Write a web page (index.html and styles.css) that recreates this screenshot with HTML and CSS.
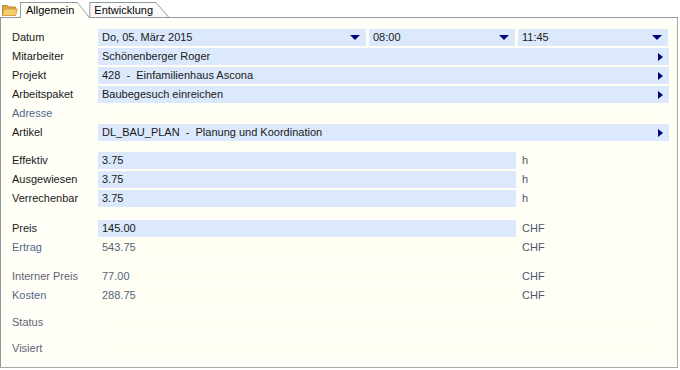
FILE: index.html
```html
<!DOCTYPE html>
<html lang="de">
<head>
    <meta charset="UTF-8">
    <meta name="viewport" content="width=device-width, initial-scale=1.0">
    <title>Rapport</title>
    <link rel="stylesheet" href="styles.css">
</head>
<body>
    <div class="tabbar">
        <svg class="folder" width="16" height="12" viewBox="0 0 16 12">
            <path d="M0.5 1.5 H5.5 L7 3 H13.5 V11.5 H0.5 Z" fill="#d9a441" stroke="#c08a2c" stroke-width="1"/>
            <path d="M0.5 11.5 L2.5 5 H15.5 L13.5 11.5 Z" fill="#f7cd72" stroke="#d9a441" stroke-width="1"/>
        </svg>
        <div class="tab active"><span>Allgemein</span></div>
        <div class="tab"><span>Entwicklung</span></div>
    </div>

    <div class="panel">
        <div class="group">
            <div class="row">
                <span class="label">Datum</span>
                <div class="cells date-cells">
                    <div class="field drop">Do, 05. März 2015</div>
                    <div class="field drop">08:00</div>
                    <div class="field drop">11:45</div>
                </div>
            </div>
            <div class="row">
                <span class="label">Mitarbeiter</span>
                <div class="field next">Schönenberger Roger</div>
            </div>
            <div class="row">
                <span class="label">Projekt</span>
                <div class="field next">428 &nbsp;-&nbsp; Einfamilienhaus Ascona</div>
            </div>
            <div class="row">
                <span class="label">Arbeitspaket</span>
                <div class="field next">Baubegesuch einreichen</div>
            </div>
            <div class="row">
                <span class="label muted">Adresse</span>
                <div class="field ro"></div>
            </div>
            <div class="row">
                <span class="label">Artikel</span>
                <div class="field next">DL_BAU_PLAN &nbsp;-&nbsp; Planung und Koordination</div>
            </div>
        </div>

        <div class="group gap-11">
            <div class="row">
                <span class="label">Effektiv</span>
                <div class="cells unit-cells">
                    <div class="field">3.75</div>
                    <span class="unit">h</span>
                </div>
            </div>
            <div class="row">
                <span class="label">Ausgewiesen</span>
                <div class="cells unit-cells">
                    <div class="field">3.75</div>
                    <span class="unit">h</span>
                </div>
            </div>
            <div class="row">
                <span class="label">Verrechenbar</span>
                <div class="cells unit-cells">
                    <div class="field">3.75</div>
                    <span class="unit">h</span>
                </div>
            </div>
        </div>

        <div class="group gap-13">
            <div class="row">
                <span class="label">Preis</span>
                <div class="cells unit-cells">
                    <div class="field">145.00</div>
                    <span class="unit">CHF</span>
                </div>
            </div>
            <div class="row">
                <span class="label muted">Ertrag</span>
                <div class="cells unit-cells">
                    <div class="field ro">543.75</div>
                    <span class="unit">CHF</span>
                </div>
            </div>
        </div>

        <div class="group gap-12">
            <div class="row">
                <span class="label grey">Interner Preis</span>
                <div class="cells unit-cells">
                    <div class="field ro">77.00</div>
                    <span class="unit">CHF</span>
                </div>
            </div>
            <div class="row">
                <span class="label muted">Kosten</span>
                <div class="cells unit-cells">
                    <div class="field ro">288.75</div>
                    <span class="unit">CHF</span>
                </div>
            </div>
        </div>

        <div class="group gap-10">
            <div class="row">
                <span class="label grey">Status</span>
                <div class="field ro"></div>
            </div>
        </div>

        <div class="group gap-9">
            <div class="row">
                <span class="label grey">Visiert</span>
                <div class="field ro"></div>
            </div>
        </div>
    </div>
</body>
</html>
```

FILE: styles.css
```css
body {
    margin: 0;
    background: #ffffff;
    font-family: "Liberation Sans", Arial, sans-serif;
    font-size: 11px;
    color: #1a1a1a;
    width: 678px;
}

/* tabs */
.tabbar {
    display: flex;
    align-items: flex-end;
    height: 17px;
    padding-left: 2px;
}

.folder {
    align-self: flex-start;
    margin-top: 4px;
    margin-right: 2px;
}

.tab {
    display: flex;
    height: 15px;
    padding: 1px 0 0 1px;
    box-sizing: border-box;
    background: #919b9c;
    clip-path: polygon(0 0, calc(100% - 13px) 0, 100% 100%, 0 100%);
    margin-left: -1px;
}

.tab span {
    display: flex;
    align-items: center;
    flex: 1;
    margin-right: 1px;
    padding: 0 15px 0 4px;
    background: #fbfbfb;
    color: #000;
    clip-path: polygon(0 0, calc(100% - 12px) 0, 100% 100%, 0 100%);
}

.tab.active {
    height: 16px;
    margin-left: 0;
    margin-bottom: -1px;
    position: relative;
    z-index: 2;
}

.tab.active span {
    background: #fffff7;
    padding-left: 5px;
    padding-bottom: 1px;
}

/* panel */
.panel {
    position: relative;
    z-index: 1;
    border: 1px solid #919b9c;
    border-right-color: #a9a9a9;
    border-bottom-color: #a9a9a9;
    background: #fffff7;
    padding: 11px 8px 10px 11px;
}

.group {
    display: flex;
    flex-direction: column;
    gap: 2px;
}

.gap-9 { margin-top: 9px; }
.gap-10 { margin-top: 10px; }
.gap-11 { margin-top: 11px; }
.gap-12 { margin-top: 12px; }
.gap-13 { margin-top: 13px; }

.row {
    display: grid;
    grid-template-columns: 86px 1fr;
    height: 17px;
    line-height: 17px;
}

.label {
    white-space: nowrap;
}

.label.muted {
    color: #52698a;
}

.label.grey {
    color: #5d6675;
}

.cells {
    display: grid;
}

.date-cells {
    grid-template-columns: 268px 146px 150px;
    column-gap: 3px;
}

.unit-cells {
    grid-template-columns: 418px 1fr;
    column-gap: 6px;
}

.unit {
    color: #4d566a;
}

.field {
    position: relative;
    height: 17px;
    padding-left: 4px;
    background: #dce9fc;
    white-space: nowrap;
    overflow: hidden;
}

.field.ro {
    background: #fefef3;
    color: #56657e;
}

/* dropdown and link markers */
.field.drop::after {
    content: "";
    position: absolute;
    right: 6px;
    top: 6px;
    border-left: 5px solid transparent;
    border-right: 5px solid transparent;
    border-top: 5px solid #000080;
}

.field.next::after {
    content: "";
    position: absolute;
    right: 6px;
    top: 5px;
    border-top: 4px solid transparent;
    border-bottom: 4px solid transparent;
    border-left: 5px solid #000080;
}
```
